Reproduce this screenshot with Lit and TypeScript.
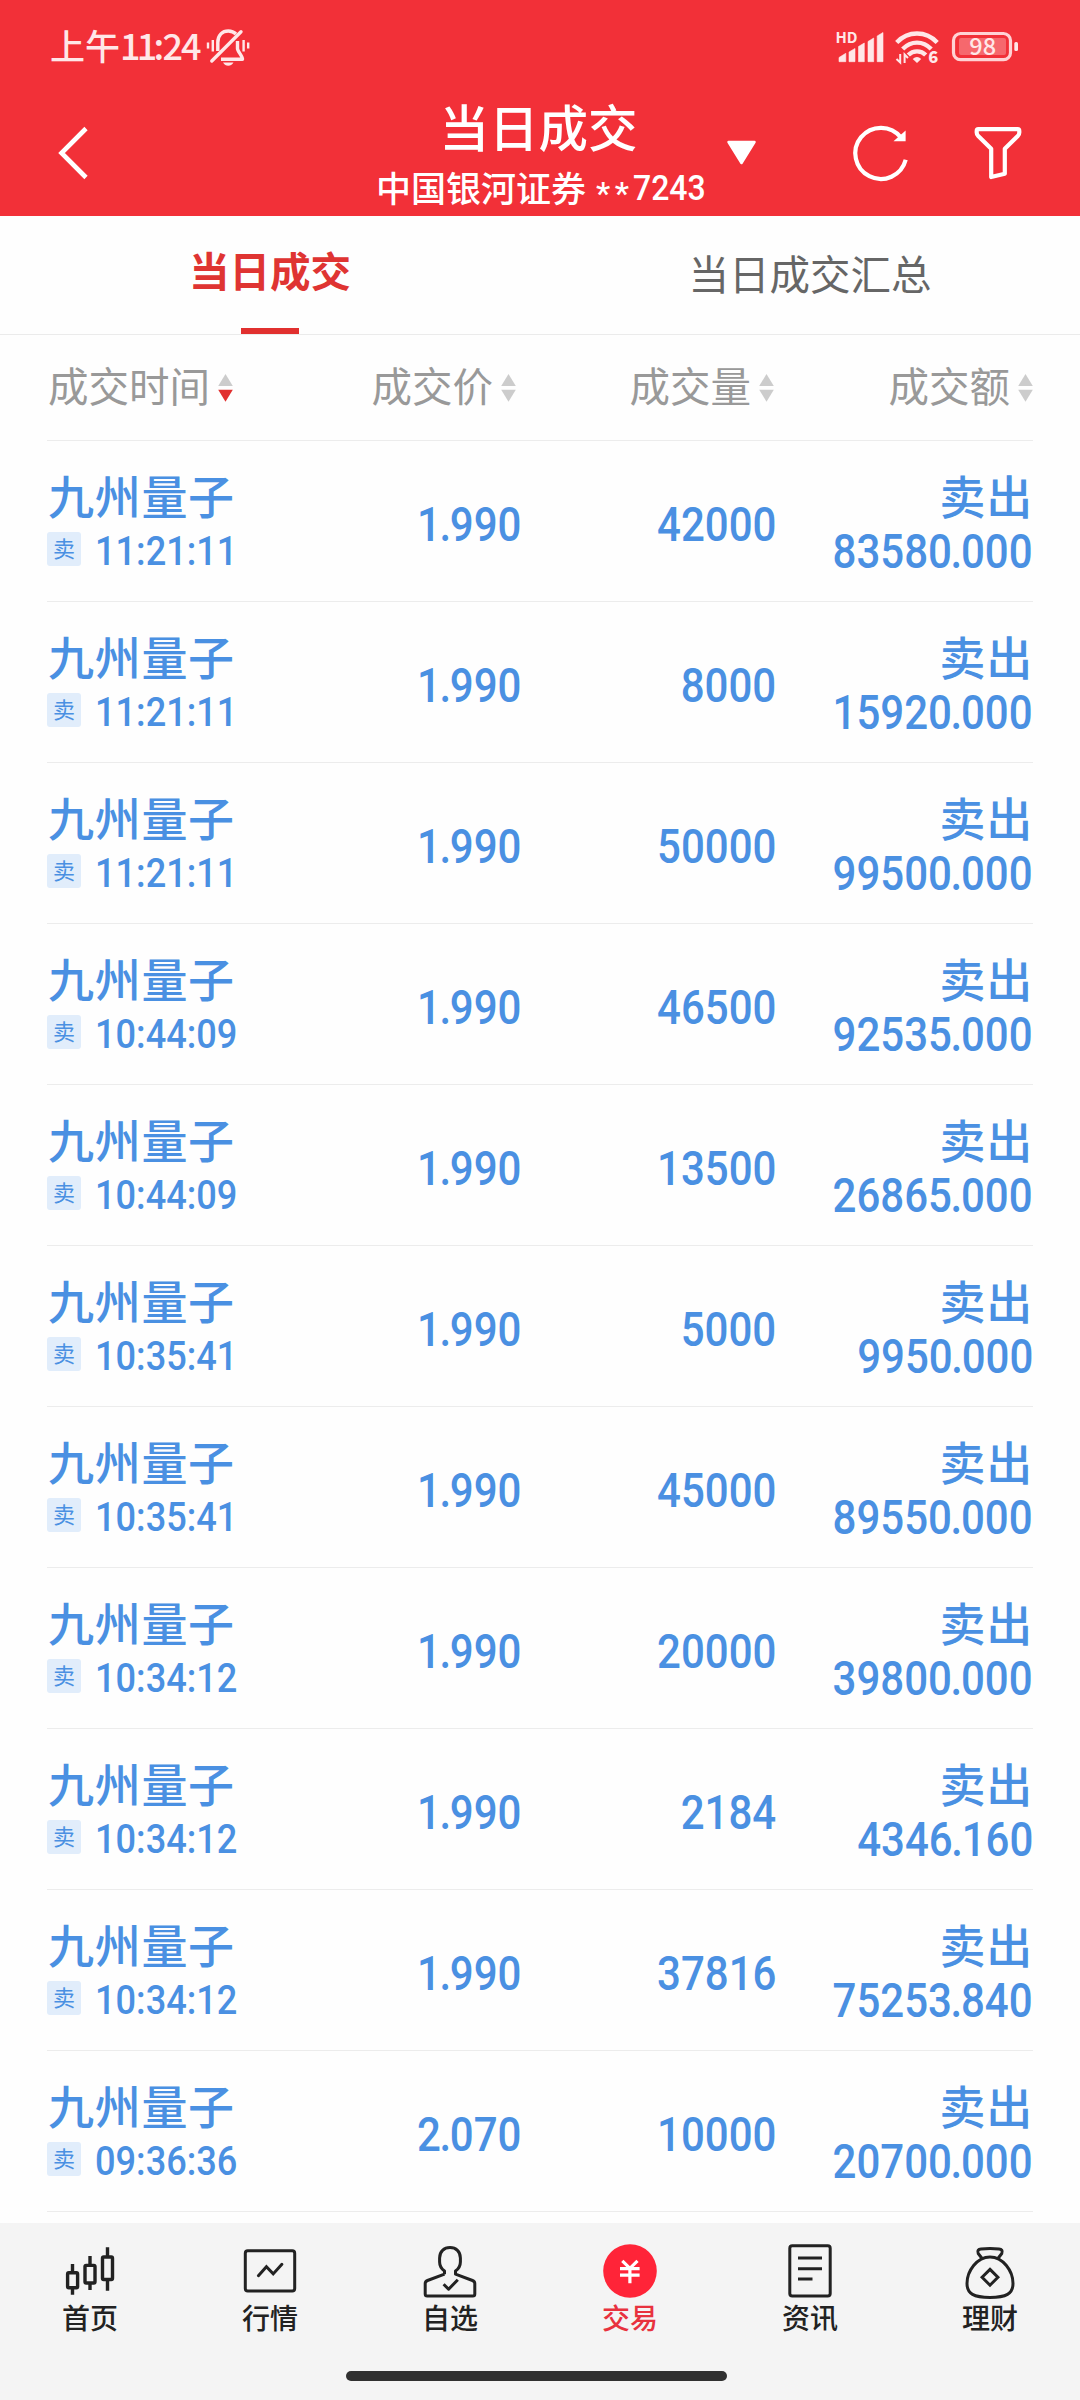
import { LitElement, html, css, svg } from "lit";
import { customElement, property } from "lit/decorators.js";
import { classMap } from "lit/directives/class-map.js";

interface Trade {
  name: string;
  time: string;
  price: string;
  volume: string;
  amount: string;
}

const trade = (time: string, price: string, volume: string, amount: string): Trade => ({
  name: "九州量子",
  time,
  price,
  volume,
  amount,
});

const TRADES: Trade[] = [
  trade("11:21:11", "1.990", "42000", "83580.000"),
  trade("11:21:11", "1.990", "8000", "15920.000"),
  trade("11:21:11", "1.990", "50000", "99500.000"),
  trade("10:44:09", "1.990", "46500", "92535.000"),
  trade("10:44:09", "1.990", "13500", "26865.000"),
  trade("10:35:41", "1.990", "5000", "9950.000"),
  trade("10:35:41", "1.990", "45000", "89550.000"),
  trade("10:34:12", "1.990", "20000", "39800.000"),
  trade("10:34:12", "1.990", "2184", "4346.160"),
  trade("10:34:12", "1.990", "37816", "75253.840"),
  trade("09:36:36", "2.070", "10000", "20700.000"),
];

const NAV_ICONS: Record<string, unknown> = {
  home: svg`
    <g fill="none" stroke="currentColor" stroke-width="3.4">
      <rect x="7.6" y="32.7" width="10" height="15" rx="1.2"/>
      <path d="M12.5 24v8M12.5 49v5.7"/>
      <rect x="25" y="25.4" width="10" height="17.6" rx="1.2"/>
      <path d="M30 16v9M30 44v6"/>
      <rect x="42.5" y="17" width="10" height="22.5" rx="1.2"/>
      <path d="M47.5 7.3v9M47.5 40.5v10.2"/>
    </g>`,
  market: svg`
    <g fill="none" stroke="currentColor" stroke-width="3">
      <rect x="5.3" y="10.8" width="49.4" height="40.2" rx="2.5"/>
      <path d="M18.4 35.7L26.4 26.8 33.2 33.9 41.9 24.3" stroke-linecap="round"/>
    </g>`,
  watch: svg`
    <g fill="none" stroke="currentColor" stroke-width="3" stroke-linejoin="round">
      <path d="M24.500 34.200V31C21 28.500 19.600 25.500 19.600 22V18C19.600 11.500 24 7.500 30 7.500S40.400 11.500 40.400 18V22C40.400 25.500 39 28.500 35.500 31V34.200L52.500 40.500Q54.800 41.400 54.800 43.600V54Q54.800 56 52.800 56H7.200Q5.200 56 5.200 54V43.600Q5.200 41.400 7.500 40.500L24.500 34.200"/>
      <path d="M23.600 44.200L28.600 49.200 37.800 39.700" stroke-linecap="butt"/>
    </g>`,
  trade: svg`
    <circle cx="30" cy="31" r="26.8" fill="#ff2438"/>
    <path d="M22.300 20.800L29.900 28.300 37.500 20.800M20 28.700H39.600M20 35.200H39.600M29.900 28V43.200"
      fill="none" stroke="#fff" stroke-width="3.2"/>`,
  news: svg`
    <g fill="none" stroke="currentColor" stroke-width="3">
      <rect x="9.8" y="5.8" width="40.4" height="50.2" rx="2.5"/>
      <path d="M18 18H42M18 28.700H42M18 39H32.500"/>
    </g>`,
  wealth: svg`
    <g fill="none" stroke="currentColor" stroke-width="3" stroke-linejoin="round">
      <path d="M30 17C43 17 53 31 53 43.500C53 54 46 57.400 30 57.400S7 54 7 43.500C7 31 17 17 30 17Z"/>
      <path d="M22.300 18.700L18.200 13.500C17 10.500 18.500 9.300 21 9C27 8.200 33 8.200 39 9C41.500 9.300 43 10.500 41.800 13.500L37.700 18.700"/>
      <path d="M30 29.400L37.900 37.300 30 45.200 22.100 37.300Z" stroke-linejoin="miter"/>
    </g>`,
};

const NAV = [
  { id: "home", label: "首页" },
  { id: "market", label: "行情" },
  { id: "watch", label: "自选" },
  { id: "trade", label: "交易" },
  { id: "news", label: "资讯" },
  { id: "wealth", label: "理财" },
];

const COLUMNS = ["成交时间", "成交价", "成交量", "成交额"];

@customElement("din-number")
class DinNumber extends LitElement {
  @property() value = "";

  static styles = css`
    :host {
      display: inline-block;
      font-family: Roboto, "Noto Sans", sans-serif;
      font-weight: 500;
      white-space: nowrap;
      transform: scaleX(0.875);
      transform-origin: right center;
    }
    .dot {
      margin: 0 -1.5px;
    }
  `;

  render() {
    const [whole, fraction] = this.value.split(".");
    return fraction === undefined
      ? html`${whole}`
      : html`${whole}<span class="dot">.</span>${fraction}`;
  }
}

@customElement("status-bar")
class StatusBar extends LitElement {
  static styles = css`
    :host {
      display: flex;
      justify-content: space-between;
      height: 92px;
      padding: 0 61px 0 50px;
      color: #ffe7e8;
      font-family: "Noto Sans CJK SC", sans-serif;
      font-weight: 500;
    }
    .left,
    .right {
      display: flex;
      align-items: flex-start;
    }
    .clock {
      margin-top: 19px;
      font-size: 35px;
      line-height: 50px;
      white-space: nowrap;
    }
    .digits {
      display: inline-block;
      font-size: 36px;
      letter-spacing: -1.8px;
    }
    .ones {
      letter-spacing: -3.8px;
    }
    .bell {
      width: 44px;
      height: 40px;
      margin: 27px 0 0 6px;
    }
    .signals {
      width: 189px;
      height: 60px;
      margin-top: 17px;
    }
    text {
      font-family: "Noto Sans CJK SC", sans-serif;
      fill: currentColor;
    }
  `;

  render() {
    return html`
      <div class="left">
        <span class="clock">上午<span class="digits"><span class="ones">11</span>:24</span></span>
        <svg class="bell" viewBox="0 0 44 40" fill="none" stroke="currentColor">
          <path d="M11.800 24V15.500C11.800 7.800 16.500 4 22.300 4C25.200 4 28 5 30 7" stroke-width="3.4"/>
          <path d="M5.800 34L35 4.800" stroke-width="3.4" stroke-linecap="round"/>
          <path d="M31.500 14V21.500C31.500 24.500 36.500 29 36.500 32.200H15" stroke-width="3.4" stroke-linejoin="round"/>
          <path d="M17 35.500H27.500C26 38 24.500 38.700 22.200 38.700S18.500 38 17 35.500Z" fill="currentColor" stroke="none"/>
          <path d="M2 15.500V21.500M6.800 13V24.500M37.600 13V24.500M42.200 15.500V21.500" stroke-width="2.4"/>
        </svg>
      </div>
      <div class="right">
        <svg class="signals" viewBox="830 17 189 60" fill="currentColor">
          <text x="835.5" y="43.4" font-size="15" font-weight="700">HD</text>
          <path d="M839 61.700V57.500L845.800 53.300V61.700ZM849 61.700V52L855 48.500V61.700ZM858.500 61.700V46.500L864.300 43V61.700ZM868 61.700V41.500L873.700 38V61.700ZM877.200 61.700V36L883 32.500V61.700Z"
            stroke="currentColor" stroke-width=".6" stroke-linejoin="round"/>
          <g fill="none" stroke="currentColor" stroke-width="4.4">
            <path d="M896.700 42.500C908 30.500 926 30.500 937.200 42.500"/>
            <path d="M902.700 49C911 40.500 923 40.500 931.200 49"/>
            <path d="M908.300 55C913 50.200 921 50.200 925.700 55"/>
          </g>
          <path d="M912.700 59Q917 54.800 921.200 59L917 63Z"/>
          <path d="M900.200 54V62.500L896.500 59M904.600 63V54.500L908 58" fill="none" stroke="currentColor" stroke-width="2"/>
          <text x="928.3" y="63.2" font-size="16.5" font-weight="900">6</text>
          <rect x="953.5" y="33.5" width="57" height="26.2" rx="7" fill="none" stroke="#ffd2d4" stroke-width="3.2"/>
          <rect x="959" y="38" width="47" height="17" rx="2" fill="#f6686d"/>
          <rect x="1014.3" y="42" width="3.7" height="9" rx="1.5"/>
          <text x="982.7" y="55.2" font-size="23.5" font-weight="500" text-anchor="middle">98</text>
        </svg>
      </div>
    `;
  }
}

@customElement("title-bar")
class TitleBar extends LitElement {
  static styles = css`
    :host {
      display: grid;
      grid-template-columns: 340px 400px 340px;
      height: 124px;
      color: #fff;
      font-family: "Noto Sans CJK SC", sans-serif;
    }
    .start,
    .end {
      display: flex;
    }
    .back {
      width: 34px;
      height: 56px;
      margin: 33px 0 0 56px;
    }
    .center {
      display: flex;
      flex-direction: column;
      align-items: center;
    }
    .title {
      margin: 4px 3px 0 0;
      font-size: 49.5px;
      line-height: 60px;
      font-weight: 500;
    }
    .account {
      display: flex;
      margin: 11px 0 0 4px;
      font-size: 35px;
      line-height: 40px;
      height: 40px;
      font-weight: 500;
      white-space: nowrap;
    }
    .stars {
      position: relative;
      top: 6px;
      margin-left: 10px;
      font-family: Roboto, sans-serif;
      font-size: 32px;
      letter-spacing: 4.5px;
    }
    din-number {
      transform: scaleX(0.914);
      transform-origin: left center;
      margin-right: -5px;
      line-height: 43px;
    }
    .tools {
      width: 340px;
      height: 124px;
    }
  `;

  render() {
    return html`
      <div class="start">
        <svg class="back" viewBox="0 0 34 56" fill="none" stroke="currentColor" stroke-width="4.6">
          <path d="M30 3.500L5.500 28 30 52.500"/>
        </svg>
      </div>
      <div class="center">
        <div class="title">当日成交</div>
        <div class="account">中国银河证券<span class="stars">**</span><din-number value="7243"></din-number></div>
      </div>
      <div class="end">
        <svg class="tools" viewBox="740 92 340 124" overflow="visible">
          <path d="M728.500 142H754.500L741.500 163Z" fill="#fff" stroke="#fff" stroke-width="2.5" stroke-linejoin="round"/>
          <g fill="none" stroke="#fff" stroke-width="4.2">
            <path d="M901 137.500A25.600 25.600 0 1 0 905.700 159.800"/>
            <path d="M978.300 129.200H1017.700Q1019.300 129.200 1019.300 131V132.500Q1019.300 134.500 1018 135.700L1004.800 148.800V173.800L991.200 177V148.800L978 135.700Q976.700 134.500 976.700 132.500V131Q976.700 129.200 978.300 129.200Z" stroke-linejoin="round"/>
          </g>
          <path d="M905.600 130.500V141.300H893.500Z" fill="#fff"/>
        </svg>
      </div>
    `;
  }
}

@customElement("tab-strip")
class TabStrip extends LitElement {
  static styles = css`
    :host {
      display: grid;
      grid-template-columns: 1fr 1fr;
      height: 118px;
      border-bottom: 1px solid #ebebeb;
      font-family: "Noto Sans CJK SC", sans-serif;
      font-size: 40.5px;
      line-height: 56px;
      color: #666;
    }
    .tab {
      display: flex;
      flex-direction: column;
      align-items: center;
      justify-content: space-between;
      padding-top: 29px;
    }
    .tab.active {
      padding-top: 26px;
      color: #df3432;
      font-weight: 700;
    }
    .mark {
      width: 58px;
      height: 6px;
      background: #e1302f;
    }
  `;

  render() {
    return html`
      <div class="tab active"><span>当日成交</span><span class="mark"></span></div>
      <div class="tab"><span>当日成交汇总</span></div>
    `;
  }
}

@customElement("trade-table")
class TradeTable extends LitElement {
  static styles = css`
    :host {
      display: block;
      padding: 0 47px;
      font-family: "Noto Sans CJK SC", sans-serif;
      color: #4a90e2;
    }
    .head,
    .row {
      display: grid;
      border-bottom: 1px solid #ececec;
      box-sizing: border-box;
    }
    .head {
      grid-template-columns: 228px 241px 258px 259px;
      height: 106px;
      font-size: 40.5px;
      line-height: 56px;
      color: #999;
    }
    .col {
      display: flex;
      justify-content: flex-end;
      padding-top: 22px;
      white-space: nowrap;
    }
    .col.first {
      justify-content: flex-start;
      padding-left: 1px;
    }
    .sort {
      width: 15px;
      height: 28px;
      margin: 17px 0 0 8px;
      fill: #ccc;
    }
    .desc {
      fill: #e1302f;
    }
    .row {
      grid-template-columns: 231px 244px 255px 256px;
      height: 161px;
      font-size: 48px;
      line-height: 48px;
      font-weight: 500;
    }
    .stock,
    .total {
      display: flex;
      flex-direction: column;
      padding-top: 29px;
    }
    .total {
      align-items: flex-end;
    }
    .name,
    .side {
      font-size: 46px;
      letter-spacing: 0.7px;
    }
    .name {
      padding-left: 1px;
    }
    .when {
      display: flex;
      align-items: center;
      gap: 14px;
      height: 34px;
      margin-top: 14px;
    }
    .badge {
      width: 34px;
      height: 34px;
      border-radius: 3px;
      background: #e1edfb;
      font-size: 22px;
      line-height: 31px;
      text-align: center;
      font-weight: 400;
    }
    .time {
      padding-top: 4px;
      font-size: 40.5px;
      transform-origin: left center;
      transform: scaleX(0.893);
    }
    .value {
      display: flex;
      justify-content: flex-end;
      padding: 60px 1px 0 0;
    }
    .sum {
      margin-top: 10px;
    }
  `;

  private column(label: string, index: number) {
    return html`
      <div class=${classMap({ col: true, first: index === 0 })}>
        <span>${label}</span>
        <svg class="sort" viewBox="0 0 15 28">
          <path d="M7.500 0L14.800 12H.2Z"/>
          <path class=${classMap({ desc: index === 0 })} d="M7.500 27.700L14.800 15.700H.2Z"/>
        </svg>
      </div>
    `;
  }

  private row(t: Trade) {
    return html`
      <div class="row">
        <div class="stock">
          <span class="name">${t.name}</span>
          <div class="when">
            <span class="badge">卖</span>
            <din-number class="time" .value=${t.time}></din-number>
          </div>
        </div>
        <div class="value"><din-number .value=${t.price}></din-number></div>
        <div class="value"><din-number .value=${t.volume}></din-number></div>
        <div class="total">
          <span class="side">卖出</span>
          <din-number class="sum" .value=${t.amount}></din-number>
        </div>
      </div>
    `;
  }

  render() {
    return html`
      <div class="head">${COLUMNS.map((c, i) => this.column(c, i))}</div>
      ${TRADES.map((t) => this.row(t))}
    `;
  }
}

@customElement("bottom-nav")
class BottomNav extends LitElement {
  static styles = css`
    :host {
      display: flex;
      flex-direction: column;
      align-items: center;
      background: #f4f4f4;
      color: #222;
      font-family: "Noto Sans CJK SC", sans-serif;
    }
    .items {
      display: grid;
      grid-template-columns: repeat(6, 1fr);
      width: 100%;
      padding-top: 17px;
    }
    .item {
      display: flex;
      flex-direction: column;
      align-items: center;
      font-size: 28px;
      line-height: 34px;
      font-weight: 500;
    }
    .item.active {
      color: #e8323e;
    }
    .icon {
      width: 60px;
      height: 60px;
    }
    .handle {
      width: 381px;
      height: 10px;
      margin: 37px 7px 0 0;
      border-radius: 5px;
      background: #303030;
    }
  `;

  render() {
    return html`
      <div class="items">
        ${NAV.map(
          (n) => html`
            <div class=${classMap({ item: true, active: n.id === "trade" })}>
              <svg class="icon" viewBox="0 0 60 60">${NAV_ICONS[n.id]}</svg>
              <span>${n.label}</span>
            </div>
          `,
        )}
      </div>
      <div class="handle"></div>
    `;
  }
}

@customElement("app-root")
class AppRoot extends LitElement {
  static styles = css`
    :host {
      display: flex;
      flex-direction: column;
      width: 1080px;
      height: 2400px;
      overflow: hidden;
      background: #fefefe;
    }
    .header {
      background: #f23038;
      height: 216px;
    }
    .list {
      flex: 1;
    }
    .nav {
      height: 177px;
    }
  `;

  render() {
    return html`
      <div class="header">
        <status-bar></status-bar>
        <title-bar></title-bar>
      </div>
      <tab-strip></tab-strip>
      <trade-table class="list"></trade-table>
      <bottom-nav class="nav"></bottom-nav>
    `;
  }
}
